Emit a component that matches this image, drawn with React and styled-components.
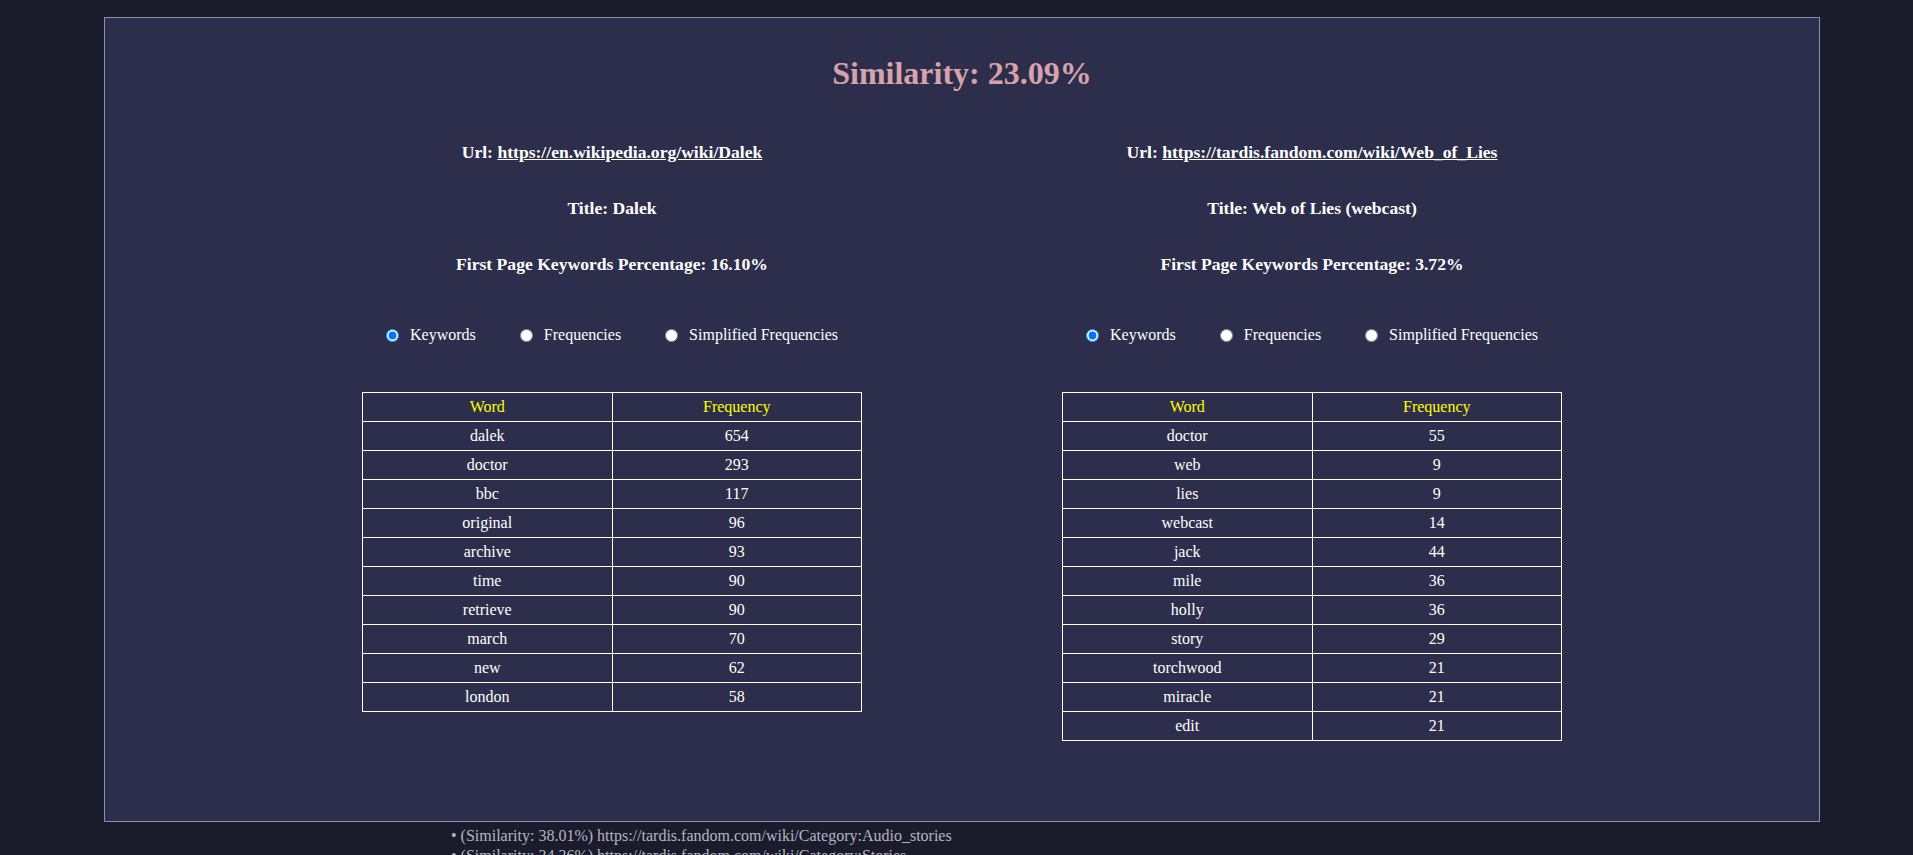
import React from "react";
import styled, { createGlobalStyle } from "styled-components";

const GlobalStyle = createGlobalStyle`
  html, body {
    margin: 0;
    padding: 0;
    background: #1b1c2b;
    font-family: "Liberation Serif", "Times New Roman", serif;
    color: #ffffff;
  }
`;

const left = {
  url: "https://en.wikipedia.org/wiki/Dalek",
  title: "Dalek",
  percentage: "16.10%",
  rows: [
    ["dalek", 654],
    ["doctor", 293],
    ["bbc", 117],
    ["original", 96],
    ["archive", 93],
    ["time", 90],
    ["retrieve", 90],
    ["march", 70],
    ["new", 62],
    ["london", 58],
  ],
};

const right = {
  url: "https://tardis.fandom.com/wiki/Web_of_Lies",
  title: "Web of Lies (webcast)",
  percentage: "3.72%",
  rows: [
    ["doctor", 55],
    ["web", 9],
    ["lies", 9],
    ["webcast", 14],
    ["jack", 44],
    ["mile", 36],
    ["holly", 36],
    ["story", 29],
    ["torchwood", 21],
    ["miracle", 21],
    ["edit", 21],
  ],
};

const related = [
  ["38.01%", "https://tardis.fandom.com/wiki/Category:Audio_stories"],
  ["34.36%", "https://tardis.fandom.com/wiki/Category:Stories"],
  ["31.12%", "https://tardis.fandom.com/wiki/Dalek"],
  ["29.54%", "https://tardis.fandom.com/wiki/Torchwood"],
];

const PageSide = ({ side, name }) => (
  <Column>
    <Info>
      Url: <Link href={side.url}>{side.url}</Link>
    </Info>
    <Info>Title: {side.title}</Info>
    <Info>First Page Keywords Percentage: {side.percentage}</Info>
    <Options>
      <Option>
        <Radio type="radio" name={name} defaultChecked />
        Keywords
      </Option>
      <Option>
        <Radio type="radio" name={name} />
        Frequencies
      </Option>
      <Option>
        <Radio type="radio" name={name} />
        Simplified Frequencies
      </Option>
    </Options>
    <Table>
      <thead>
        <tr>
          <Head>Word</Head>
          <Head>Frequency</Head>
        </tr>
      </thead>
      <tbody>
        {side.rows.map(([word, freq]) => (
          <tr key={word}>
            <Cell>{word}</Cell>
            <Cell>{freq}</Cell>
          </tr>
        ))}
      </tbody>
    </Table>
  </Column>
);

const App = () => {
  return (
    <>
      <GlobalStyle />
      <Page>
        <Panel>
          <Heading>Similarity: 23.09%</Heading>
          <Columns>
            <PageSide side={left} name="left-view" />
            <PageSide side={right} name="right-view" />
          </Columns>
        </Panel>
        <Related>
          {related.map(([score, url]) => (
            <li key={url}>
              (Similarity: {score}) {url}
            </li>
          ))}
        </Related>
      </Page>
    </>
  );
};

const Page = styled.div`
  padding: 17px 0 40px 104px;
`;

const Panel = styled.section`
  width: 1714px;
  height: 803px;
  box-sizing: content-box;
  background: #2d2e4b;
  border: 1px solid #8c8fa3;
`;

const Heading = styled.h1`
  margin: 37px 0 0;
  font-size: 32px;
  line-height: 37px;
  text-align: center;
  color: #d6a3aa;
`;

const Columns = styled.div`
  display: grid;
  grid-template-columns: 700px 700px;
  justify-content: center;
  margin-top: 50px;
`;

const Column = styled.div`
  display: flex;
  flex-direction: column;
  align-items: center;
`;

const Info = styled.div`
  font-size: 17.6px;
  font-weight: bold;
  line-height: 20px;
  margin-bottom: 36px;
`;

const Link = styled.a`
  color: #ffffff;
  text-decoration: underline;
`;

const Options = styled.div`
  display: flex;
  align-items: center;
  gap: 44px;
  margin-top: 16px;
  font-size: 16px;
  line-height: 18px;
`;

const Option = styled.label`
  display: inline-flex;
  align-items: center;
`;

const Radio = styled.input`
  width: 13px;
  height: 13px;
  margin: 0 11px 0 0;
`;

const Table = styled.table`
  width: 500px;
  margin-top: 48px;
  border-collapse: collapse;
  border: 1px solid #ffffff;
  font-size: 16px;
`;

const Head = styled.th`
  width: 50%;
  height: 28px;
  padding: 0;
  border: 1px solid #ffffff;
  color: #ffff00;
  font-weight: normal;
  text-align: center;
`;

const Cell = styled.td`
  height: 28px;
  padding: 0;
  border: 1px solid #ffffff;
  text-align: center;
  color: #ffffff;
`;

const Related = styled.ul`
  list-style: none;
  margin: 4px 0 0;
  padding: 0 0 0 347px;
  font-size: 16px;
  line-height: 20px;
  color: #b4b4c4;

  li::before {
    content: "• ";
  }
`;

export default App;
